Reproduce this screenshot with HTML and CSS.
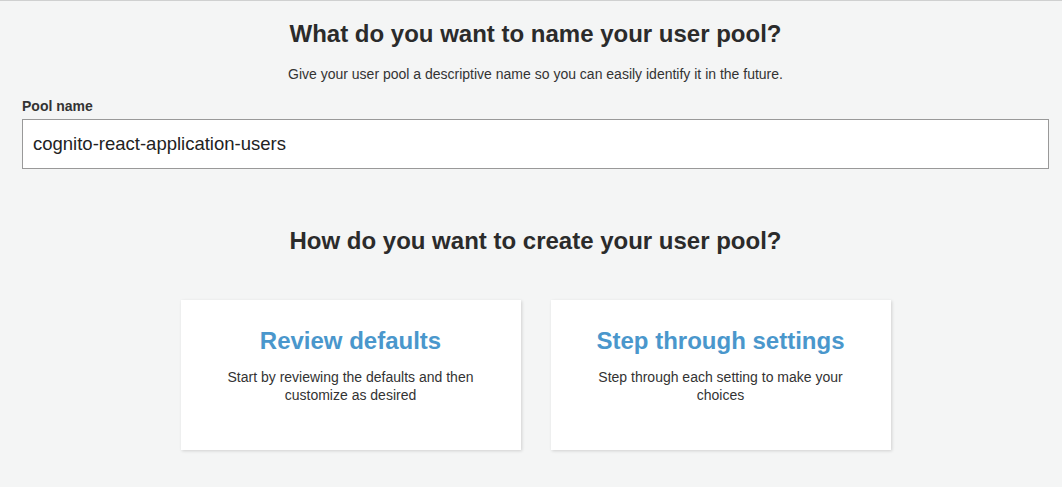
FILE: index.html
```html
<!DOCTYPE html>
<html lang="en">
  <head>
    <meta charset="UTF-8" />
    <title>Create a user pool</title>
    <link rel="stylesheet" href="styles.css">
  </head>
  <body>
    <div class="wizard">
      <h1 class="section-title">What do you want to name your user pool?</h1>
      <p class="section-hint">Give your user pool a descriptive name so you can easily identify it in the future.</p>

      <label class="field-label" for="pool-name">Pool name</label>
      <input type="text" id="pool-name" class="field-input" value="cognito-react-application-users" />

      <h1 class="section-title second">How do you want to create your user pool?</h1>

      <div class="choices">
        <div class="choice-card">
          <h2>Review defaults</h2>
          <p>Start by reviewing the defaults and then customize as desired</p>
        </div>
        <div class="choice-card">
          <h2>Step through settings</h2>
          <p>Step through each setting to make your choices</p>
        </div>
      </div>
    </div>
  </body>
</html>
```

FILE: styles.css
```css
body {
  margin: 0;
  padding: 0;
  background: #f4f5f5;
  font-family: "Liberation Sans", Arial, sans-serif;
  color: #333;
  border-top: 1px solid #cfd0d0;
  min-height: 486px;
}

.wizard {
  padding: 0 13px 0 22px;
  display: flex;
  flex-direction: column;
}

.section-title {
  margin: 18px 0 0;
  font-size: 24px;
  line-height: 30px;
  font-weight: bold;
  text-align: center;
  color: #2b2b2b;
}

.section-title.second {
  margin-top: 57px;
}

.section-hint {
  margin: 16px 0 0;
  font-size: 14px;
  line-height: 18px;
  text-align: center;
  color: #333;
}

.field-label {
  margin-top: 15px;
  font-size: 14px;
  line-height: 16px;
  font-weight: bold;
  color: #333;
}

.field-input {
  margin-top: 5px;
  height: 50px;
  box-sizing: border-box;
  padding: 0 10px;
  border: 1px solid #999;
  background: #fff;
  font-family: "Liberation Sans", Arial, sans-serif;
  font-size: 18.5px;
  color: #222;
  outline: none;
}

.choices {
  margin-top: 44px;
  display: flex;
  justify-content: center;
  gap: 30px;
}

.choice-card {
  width: 340px;
  height: 150px;
  box-sizing: border-box;
  background: #fff;
  box-shadow: 1px 1px 3px rgba(0, 0, 0, 0.15);
  text-align: center;
  padding: 26px 40px 0;
}

.choice-card h2 {
  margin: 0;
  font-size: 24px;
  line-height: 30px;
  font-weight: bold;
  color: #4a97cc;
}

.choice-card p {
  margin: 12px 0 0;
  font-size: 14px;
  line-height: 18px;
  color: #333;
}
```
